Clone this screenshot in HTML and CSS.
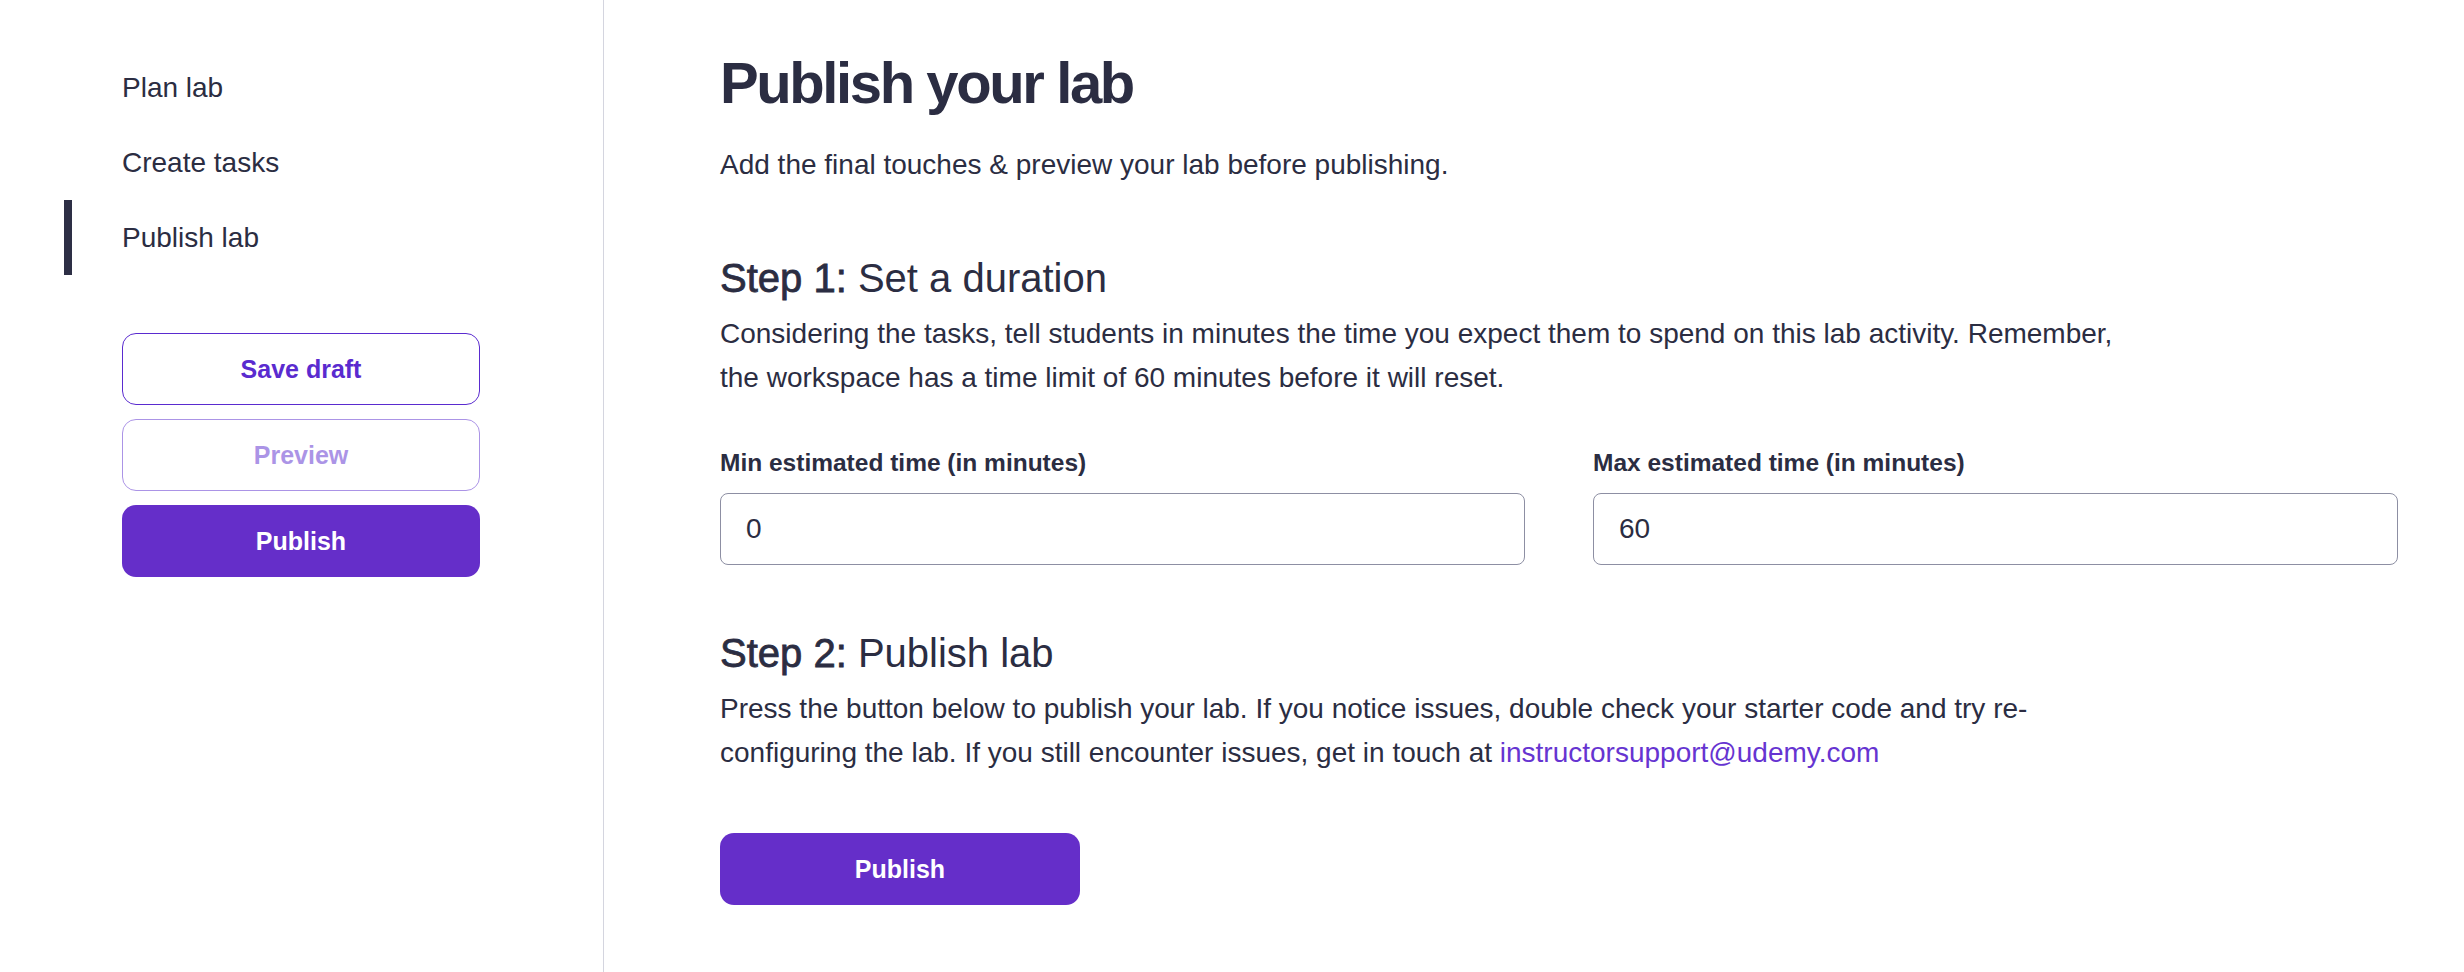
FILE: index.html
```html
<!DOCTYPE html>
<html lang="en">
<head>
    <meta charset="UTF-8">
    <meta name="viewport" content="width=device-width, initial-scale=1.0">
    <title>Publish your lab</title>
    <link rel="stylesheet" href="styles.css">
</head>
<body>
    <div class="page">
        <aside class="sidebar">
            <ul class="steps">
                <li class="steps-item">Plan lab</li>
                <li class="steps-item">Create tasks</li>
                <li class="steps-item active">Publish lab</li>
            </ul>
            <div class="actions">
                <button class="btn btn-secondary">Save draft</button>
                <button class="btn btn-secondary" disabled>Preview</button>
                <button class="btn btn-primary">Publish</button>
            </div>
        </aside>
        <main class="content">
            <h1 class="title">Publish your lab</h1>
            <p class="intro">Add the final touches &amp; preview your lab before publishing.</p>

            <section class="step step-first">
                <h2 class="step-title"><strong>Step 1:</strong> Set a duration</h2>
                <p class="step-text">Considering the tasks, tell students in minutes the time you expect them to spend on this lab activity. Remember, the workspace has a time limit of 60 minutes before it will reset.</p>
                <div class="fields">
                    <div class="field">
                        <label for="min-time">Min estimated time (in minutes)</label>
                        <input id="min-time" type="text" value="0">
                    </div>
                    <div class="field">
                        <label for="max-time">Max estimated time (in minutes)</label>
                        <input id="max-time" type="text" value="60">
                    </div>
                </div>
            </section>

            <section class="step step-second">
                <h2 class="step-title"><strong>Step 2:</strong> Publish lab</h2>
                <p class="step-text">Press the button below to publish your lab. If you notice issues, double check your starter code and try re-configuring the lab. If you still encounter issues, get in touch at <a href="#">instructorsupport@udemy.com</a></p>
                <button class="btn btn-primary btn-publish">Publish</button>
            </section>
        </main>
    </div>
</body>
</html>
```
FILE: styles.css
```css
*{
    margin: 0;
    padding: 0;
    box-sizing: border-box;
}
body{
    font-family: "Liberation Sans", Arial, sans-serif;
    color: #2b2d42;
    background: #fff;
}
a{
    text-decoration: none;
    color: #6634d1;
}
.page{
    display: flex;
    min-height: 100vh;
}
.sidebar{
    width: 604px;
    flex-shrink: 0;
    border-right: 1px solid #d4d5df;
    padding-top: 50px;
    padding-left: 64px;
}
.steps{
    list-style: none;
}
.steps-item{
    height: 75px;
    line-height: 75px;
    font-size: 28px;
    padding-left: 50px;
    border-left: 8px solid transparent;
}
.steps-item.active{
    border-left-color: #2d2f45;
}
.actions{
    width: 358px;
    margin-left: 58px;
    margin-top: 58px;
    display: flex;
    flex-direction: column;
    gap: 14px;
}
.btn{
    height: 72px;
    border-radius: 14px;
    font-family: inherit;
    font-size: 25px;
    font-weight: bold;
    cursor: pointer;
}
.btn-secondary{
    background: #fff;
    color: #5a2bcf;
    border: 1px solid #5a2bcf;
}
.btn-secondary:disabled{
    opacity: 0.5;
    cursor: default;
}
.btn-primary{
    background: #652ec9;
    color: #fff;
    border: none;
}
.content{
    flex: 1;
    padding: 47px 66px 0 116px;
}
.title{
    font-size: 58px;
    line-height: 72px;
    letter-spacing: -2.4px;
    font-weight: bold;
}
.intro{
    margin-top: 24px;
    font-size: 28px;
    line-height: 44px;
}
.step-first{
    margin-top: 67px;
}
.step-second{
    margin-top: 64px;
}
.step-title{
    font-size: 40px;
    line-height: 48px;
    font-weight: normal;
}
.step-title strong{
    font-weight: normal;
    -webkit-text-stroke: 0.8px currentColor;
}
.step-text{
    margin-top: 10px;
    max-width: 1400px;
    font-size: 28px;
    line-height: 44px;
}
.fields{
    margin-top: 45px;
    display: grid;
    grid-template-columns: 1fr 1fr;
    column-gap: 68px;
}
.field label{
    display: block;
    font-size: 24.5px;
    line-height: 36px;
    font-weight: bold;
    margin-bottom: 12px;
}
.field input{
    width: 100%;
    height: 72px;
    padding: 0 25px;
    border: 1px solid #8d8fa3;
    border-radius: 8px;
    font-family: inherit;
    font-size: 28px;
    color: #2b2d42;
    outline: none;
}
.btn-publish{
    margin-top: 58px;
    width: 360px;
}
```
